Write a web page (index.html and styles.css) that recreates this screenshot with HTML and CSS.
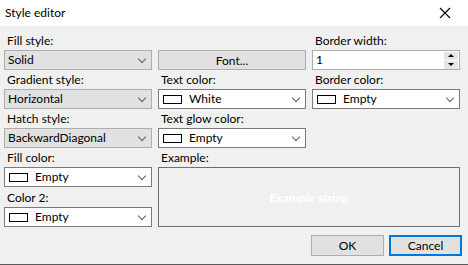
FILE: index.html
```html
<!DOCTYPE html>
<html lang="en">
<head>
    <meta charset="UTF-8">
    <title>Style editor</title>
    <link rel="stylesheet" href="styles.css">
</head>
<body>
    <div class="window">
        <div class="titlebar">
            <span class="title">Style editor</span>
            <svg class="close" width="12" height="12" viewBox="0 0 12 12">
                <path d="M1 1 L11 11 M11 1 L1 11" stroke="#000" stroke-width="1.1" fill="none"/>
            </svg>
        </div>
        <div class="content">
            <div class="grid">
                <!-- column 1 -->
                <label class="lbl c1 r1">Fill style:</label>
                <div class="combo c1 r2"><span class="value">Solid</span><span class="arrow"></span></div>
                <label class="lbl c1 r3">Gradient style:</label>
                <div class="combo c1 r4"><span class="value">Horizontal</span><span class="arrow"></span></div>
                <label class="lbl c1 r5">Hatch style:</label>
                <div class="combo c1 r6"><span class="value">BackwardDiagonal</span><span class="arrow"></span></div>
                <label class="lbl c1 r7">Fill color:</label>
                <div class="combo color c1 r8"><span class="swatch"></span><span class="value">Empty</span><span class="arrow"></span></div>
                <label class="lbl c1 r9">Color 2:</label>
                <div class="combo color c1 r10"><span class="swatch"></span><span class="value">Empty</span><span class="arrow"></span></div>

                <!-- column 2 -->
                <button class="btn c2 r2">Font...</button>
                <label class="lbl c2 r3">Text color:</label>
                <div class="combo color c2 r4"><span class="swatch"></span><span class="value">White</span><span class="arrow"></span></div>
                <label class="lbl c2 r5">Text glow color:</label>
                <div class="combo color c2 r6"><span class="swatch"></span><span class="value">Empty</span><span class="arrow"></span></div>
                <label class="lbl c2 r7">Example:</label>
                <div class="example">Example string</div>

                <!-- column 3 -->
                <label class="lbl c3 r1">Border width:</label>
                <div class="spin c3 r2">
                    <span class="value">1</span>
                    <div class="spin-btns">
                        <span class="spin-btn"><i class="up"></i></span>
                        <span class="spin-btn"><i class="down"></i></span>
                    </div>
                </div>
                <label class="lbl c3 r3">Border color:</label>
                <div class="combo color c3 r4"><span class="swatch"></span><span class="value">Empty</span><span class="arrow"></span></div>
            </div>
            <div class="buttons">
                <button class="btn dlg">OK</button>
                <button class="btn dlg focused">Cancel</button>
            </div>
        </div>
    </div>
</body>
</html>
```
FILE: styles.css
```css
body {
    margin: 0;
    font-family: 'Lato', 'Noto Sans', sans-serif;
    font-size: 12px;
    color: #000;
}
.window {
    width: 468px;
    height: 265px;
    background: #f0f0f0;
    box-sizing: border-box;
    border-bottom: 1px solid #5a5a5a;
    display: flex;
    flex-direction: column;
}
.titlebar {
    height: 26px;
    background: #fff;
    display: flex;
    align-items: center;
    justify-content: space-between;
    padding: 0 17px 0 5px;
}
.title {
    font-size: 12px;
    margin-top: -1px;
}
.close {
    display: block;
}
.content {
    padding: 5px 8px 0 4px;
}
.grid {
    display: grid;
    grid-template-columns: 148px 148px 148px;
    grid-template-rows: 19px 20px 19px 20px 19px 20px 19px 20px 20px 20px;
    column-gap: 6px;
}
.c1 { grid-column: 1; }
.c2 { grid-column: 2; }
.c3 { grid-column: 3; }
.r1 { grid-row: 1; }
.r2 { grid-row: 2; }
.r3 { grid-row: 3; }
.r4 { grid-row: 4; }
.r5 { grid-row: 5; }
.r6 { grid-row: 6; }
.r7 { grid-row: 7; }
.r8 { grid-row: 8; }
.r9 { grid-row: 9; }
.r10 { grid-row: 10; }
.lbl {
    display: flex;
    align-items: flex-end;
    padding: 0 0 2px 3px;
    line-height: 14px;
}
.combo {
    position: relative;
    box-sizing: border-box;
    border: 1px solid #adadad;
    background: #e1e1e1;
    display: flex;
    align-items: center;
    padding-left: 3px;
}
.combo.color {
    background: #fff;
    border-color: #7a7a7a;
    padding-left: 4px;
}
.value {
    line-height: 16px;
}
.swatch {
    width: 17px;
    height: 7px;
    border: 1px solid #000;
    margin-right: 7px;
}
.arrow {
    position: absolute;
    right: 6px;
    top: 5px;
    width: 5px;
    height: 5px;
    border-right: 1px solid #606060;
    border-bottom: 1px solid #606060;
    transform: rotate(45deg);
}
.btn {
    font-family: inherit;
    font-size: 12px;
    color: #000;
    background: #e1e1e1;
    border: 1px solid #adadad;
    padding: 0;
    margin: 0;
    box-sizing: border-box;
}
.example {
    grid-column: 2 / 4;
    grid-row: 8 / 11;
    border: 1px solid #6e6e6e;
    display: flex;
    align-items: center;
    justify-content: center;
    color: #fff;
    font-weight: bold;
    font-size: 12px;
}
.spin {
    box-sizing: border-box;
    border: 1px solid #adadad;
    background: #fff;
    display: flex;
    align-items: center;
    justify-content: space-between;
    padding: 0 1px 0 3px;
}
.spin-btns {
    display: flex;
    flex-direction: column;
    gap: 1px;
}
.spin-btn {
    width: 14px;
    height: 8px;
    background: #e6e6e6;
    border: 0;
    display: flex;
    align-items: center;
    justify-content: center;
}
.spin-btn i {
    width: 0;
    height: 0;
    border-left: 3px solid transparent;
    border-right: 3px solid transparent;
}
.spin-btn .up {
    border-bottom: 3px solid #000;
}
.spin-btn .down {
    border-top: 3px solid #000;
}
.buttons {
    display: flex;
    justify-content: flex-end;
    gap: 5px;
    margin-top: 8px;
    margin-right: -2px;
}
.btn.dlg {
    width: 73px;
    height: 21px;
}
.btn.focused {
    border: 2px solid #0078d7;
}
```
